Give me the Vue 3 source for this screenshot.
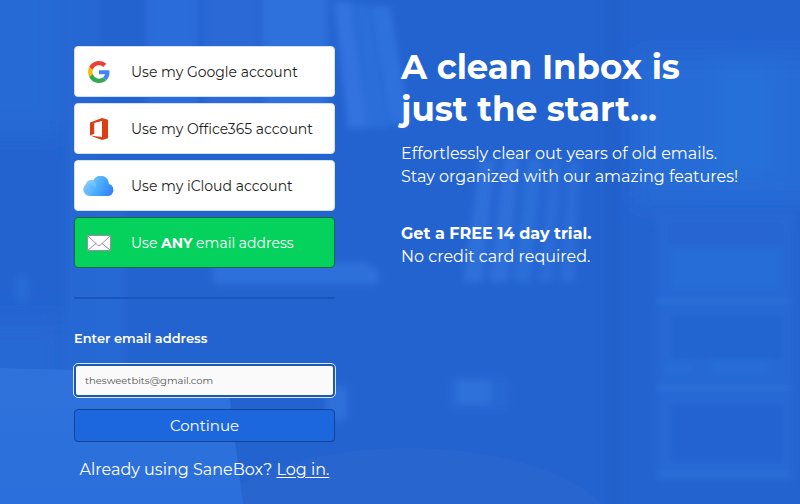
<template>
  <main class="signup-page">
    <svg class="backdrop" viewBox="0 0 800 504" preserveAspectRatio="xMidYMid slice" aria-hidden="true">
      <defs>
        <filter id="soft" x="-10%" y="-10%" width="120%" height="120%">
          <feGaussianBlur stdDeviation="3" />
        </filter>
        <filter id="softer" x="-20%" y="-20%" width="140%" height="140%">
          <feGaussianBlur stdDeviation="12" />
        </filter>
        <linearGradient id="desk" x1="0" y1="0" x2="0" y2="1">
          <stop offset="0" stop-color="#2f72dc" />
          <stop offset="1" stop-color="#2a6fdb" />
        </linearGradient>
      </defs>
      <rect width="800" height="504" fill="#2363d0" />
      <g filter="url(#softer)">
        <rect x="-30" y="-30" width="94" height="165" fill="#256bd5" />
        <rect x="-30" y="320" width="100" height="80" fill="#2568d4" />
        <rect x="635" y="55" width="200" height="150" fill="#276cd7" />
        <rect x="715" y="60" width="60" height="120" fill="#286fd9" />
      </g>
      <g filter="url(#soft)">
        <!-- curtain and left wall -->
        <rect x="66" y="-10" width="34" height="390" fill="#2567d3" />
        <rect x="100" y="200" width="24" height="170" fill="#2869d5" />
        <rect x="15" y="276" width="14" height="26" fill="#266bd6" />
        <!-- upper books -->
        <rect x="146" y="-10" width="52" height="150" fill="#2b6cd9" />
        <rect x="204" y="-10" width="54" height="150" fill="#2969d6" />
        <rect x="262" y="-10" width="66" height="150" fill="#2e70dc" />
        <path d="M334 2h18l16 126h-20z" fill="#3073df" />
        <path d="M355 4h14l20 124h-20z" fill="#2c6eda" />
        <path d="M371 6h19l20 118h-20z" fill="#2f71dd" />
        <!-- lying books -->
        <path d="M213 262h152l14 8v14H213z" fill="#2e70da" />
        <!-- middle books -->
        <path d="M480 160h15l-12 122h-20z" fill="#2d6fd9" />
        <path d="M504 156h16l-12 126h-19z" fill="#2d6fd9" />
        <path d="M527 158h16l-12 124h-18z" fill="#2c6ed8" />
        <path d="M550 158h12l-9 124h-15z" fill="#2b6cd7" />
        <path d="M568 160h12l-5 122h-15z" fill="#2b6cd7" />
        <!-- wall edge and cupboard -->
        <rect x="604" y="-10" width="18" height="530" fill="#2260cc" />
        <rect x="656" y="212" width="138" height="268" fill="#2668d4" />
        <rect x="670" y="224" width="112" height="20" fill="#2565d2" />
        <rect x="670" y="248" width="110" height="42" fill="#286dd7" />
        <rect x="658" y="298" width="130" height="6" fill="#296fd8" />
        <rect x="672" y="316" width="110" height="42" fill="#2465d1" />
        <rect x="664" y="364" width="28" height="10" fill="#286dd7" />
        <rect x="710" y="360" width="60" height="14" fill="#286dd7" />
        <rect x="658" y="385" width="130" height="6" fill="#296fd8" />
        <rect x="672" y="405" width="110" height="56" fill="#2464d1" />
        <rect x="658" y="471" width="130" height="6" fill="#296fd8" />
        <!-- mug -->
        <rect x="449" y="378" width="60" height="32" rx="4" fill="#2668d3" />
        <rect x="457" y="380" width="34" height="24" rx="3" fill="#2e71da" />
        <!-- cup beside the laptop -->
        <rect x="326" y="386" width="21" height="34" fill="#2d70d9" />
      </g>
      <ellipse cx="408" cy="540" rx="210" ry="92" fill="#2965cf" />
      <path d="M0 368l70 2h156l17 134H0z" fill="url(#desk)" />
    </svg>

    <div class="content">
      <section class="accounts">
        <div class="providers">
          <button
            v-for="provider in providers"
            :key="provider.id"
            type="button"
            class="provider"
            :class="{ active: selected === provider.id }"
            @click="selected = provider.id"
          >
            <span class="provider-icon">
              <svg v-if="provider.id === 'google'" width="22" height="22" viewBox="0 0 48 48">
                <path fill="#EA4335" d="M24 9.5c3.54 0 6.71 1.22 9.21 3.6l6.85-6.85C35.9 2.38 30.47 0 24 0 14.62 0 6.51 5.38 2.56 13.22l7.98 6.19C12.43 13.72 17.74 9.5 24 9.5z" />
                <path fill="#4285F4" d="M46.98 24.55c0-1.57-.15-3.09-.38-4.55H24v9.02h12.94c-.58 2.96-2.26 5.48-4.78 7.18l7.73 6c4.51-4.18 7.09-10.36 7.09-17.65z" />
                <path fill="#FBBC05" d="M10.53 28.59c-.48-1.45-.76-2.99-.76-4.59s.27-3.14.76-4.59l-7.98-6.19C.92 16.46 0 20.12 0 24c0 3.88.92 7.54 2.56 10.78l7.97-6.19z" />
                <path fill="#34A853" d="M24 48c6.48 0 11.93-2.13 15.89-5.81l-7.73-6c-2.15 1.45-4.92 2.3-8.16 2.3-6.26 0-11.57-4.22-13.47-9.91l-7.98 6.19C6.51 42.62 14.62 48 24 48z" />
              </svg>
              <svg v-else-if="provider.id === 'office'" width="20" height="22" viewBox="0 0 20 22">
                <path fill="#DC3E15" d="M1 4.6L13 0l6 1.8v18.4L13 22 1 17.5l12 1.4V3.1L5.2 5v10.8L1 17.5z" />
              </svg>
              <svg v-else-if="provider.id === 'icloud'" width="32" height="20" viewBox="0 0 32 20">
                <defs>
                  <linearGradient id="cloud" x1="0" y1="0.3" x2="1" y2="0.7">
                    <stop offset="0" stop-color="#86CDFB" />
                    <stop offset="0.5" stop-color="#4DAEFB" />
                    <stop offset="1" stop-color="#2F83F5" />
                  </linearGradient>
                </defs>
                <path fill="url(#cloud)" d="M7 20a6.5 6.5 0 0 1-5.2-10.6A6 6 0 0 1 3 8.2 5.2 5.2 0 0 1 10.3 4.4 8.2 8.2 0 0 1 25.9 8 6.2 6.2 0 0 1 25.5 20z" />
                <path fill="#8ED4FC" fill-opacity="0.4" d="M3 8.2A5.2 5.2 0 0 1 10.3 4.4C13 6 13.5 9 12 12 10 8 6 7 3 8.2z" />
              </svg>
              <svg v-else width="24" height="16" viewBox="0 0 24 16">
                <rect x="0.5" y="0.5" width="23" height="15" rx="0.5" fill="#fff" stroke="#9a8fa0" />
                <path d="M1 1l9.5 9q1.500 1.300 3 0L23 1M1 15l8-6.500M23 15l-8-6.500" fill="none" stroke="#9a8fa0" />
              </svg>
            </span>
            <span>{{ provider.before }}<strong v-if="provider.strong">{{ provider.strong }}</strong>{{ provider.after }}</span>
          </button>
        </div>

        <hr class="divider" />

        <form class="email-form" @submit.prevent>
          <label for="email">Enter email address</label>
          <input id="email" v-model="email" type="email" autocomplete="email" />
          <button type="submit" class="continue">Continue</button>
        </form>

        <p class="login">Already using SaneBox? <a href="#login">Log in.</a></p>
      </section>

      <section class="pitch">
        <h1>A clean Inbox is<br />just the start...</h1>
        <p>Effortlessly clear out years of old emails.<br />Stay organized with our amazing features!</p>
        <p class="trial"><strong>Get a FREE 14 day trial.</strong><br />No credit card required.</p>
      </section>
    </div>
  </main>
</template>

<script setup>
import { ref } from 'vue'

const providers = [
  { id: 'google', before: 'Use my Google account' },
  { id: 'office', before: 'Use my Office365 account' },
  { id: 'icloud', before: 'Use my iCloud account' },
  { id: 'any', before: 'Use ', strong: 'ANY', after: ' email address' }
]

const selected = ref('any')
const email = ref('thesweetbits@gmail.com')
</script>

<style>
body {
  margin: 0;
  background: #2363d0;
}
</style>

<style scoped>
.signup-page {
  position: relative;
  min-height: 100vh;
  overflow: hidden;
  box-sizing: border-box;
  padding: 46px 56px 20px 74px;
  color: #fff;
  font-family: Montserrat, Inter, 'Open Sans', sans-serif;
}

.backdrop {
  position: absolute;
  inset: 0;
  width: 100%;
  height: 100%;
}

.content {
  position: relative;
  display: grid;
  grid-template-columns: 261fr 343fr;
  gap: 66px;
}

button,
input {
  font-family: inherit;
  box-sizing: border-box;
}

.providers {
  display: flex;
  flex-direction: column;
  gap: 6px;
}

.provider {
  display: flex;
  align-items: center;
  gap: 16px;
  height: 51px;
  padding: 0 8px;
  border: 1px solid #d5dff0;
  border-radius: 4px;
  background: #fff;
  color: #1c1e22;
  font-size: 14px;
  text-align: left;
  white-space: nowrap;
  cursor: pointer;
}

.provider.active {
  background: #04d25d;
  border-color: #14663f;
  color: #fff;
}

.provider-icon {
  display: flex;
  justify-content: center;
  width: 32px;
}

.divider {
  height: 2px;
  margin: 29px 0;
  border: none;
  background: #1a55bd;
}

.email-form {
  display: flex;
  flex-direction: column;
}

.email-form label {
  margin-bottom: 16px;
  font-size: 13px;
  font-weight: 600;
  line-height: 20px;
}

.email-form input {
  width: 100%;
  height: 33px;
  padding: 0 9px;
  border: 2px solid #1d5aae;
  border-radius: 4px;
  outline: 1px solid #d5e6fa;
  background: #fafafa;
  color: #555;
  font-size: 10px;
}

.continue {
  height: 33px;
  margin-top: 12px;
  border: 1px solid #134391;
  border-radius: 4px;
  background: #1d67de;
  color: #fff;
  font-size: 15px;
  cursor: pointer;
}

.login {
  margin: 16px 0 0;
  font-size: 16px;
  line-height: 23px;
  text-align: center;
  white-space: nowrap;
}

.login a {
  color: inherit;
  text-underline-offset: 2px;
}

.pitch h1 {
  margin: 0 0 12px;
  font-size: 34px;
  font-weight: 700;
  line-height: 42px;
}

.pitch p {
  margin: 0;
  font-size: 16px;
  line-height: 23px;
  white-space: nowrap;
}

.pitch .trial {
  margin-top: 34px;
}
</style>
